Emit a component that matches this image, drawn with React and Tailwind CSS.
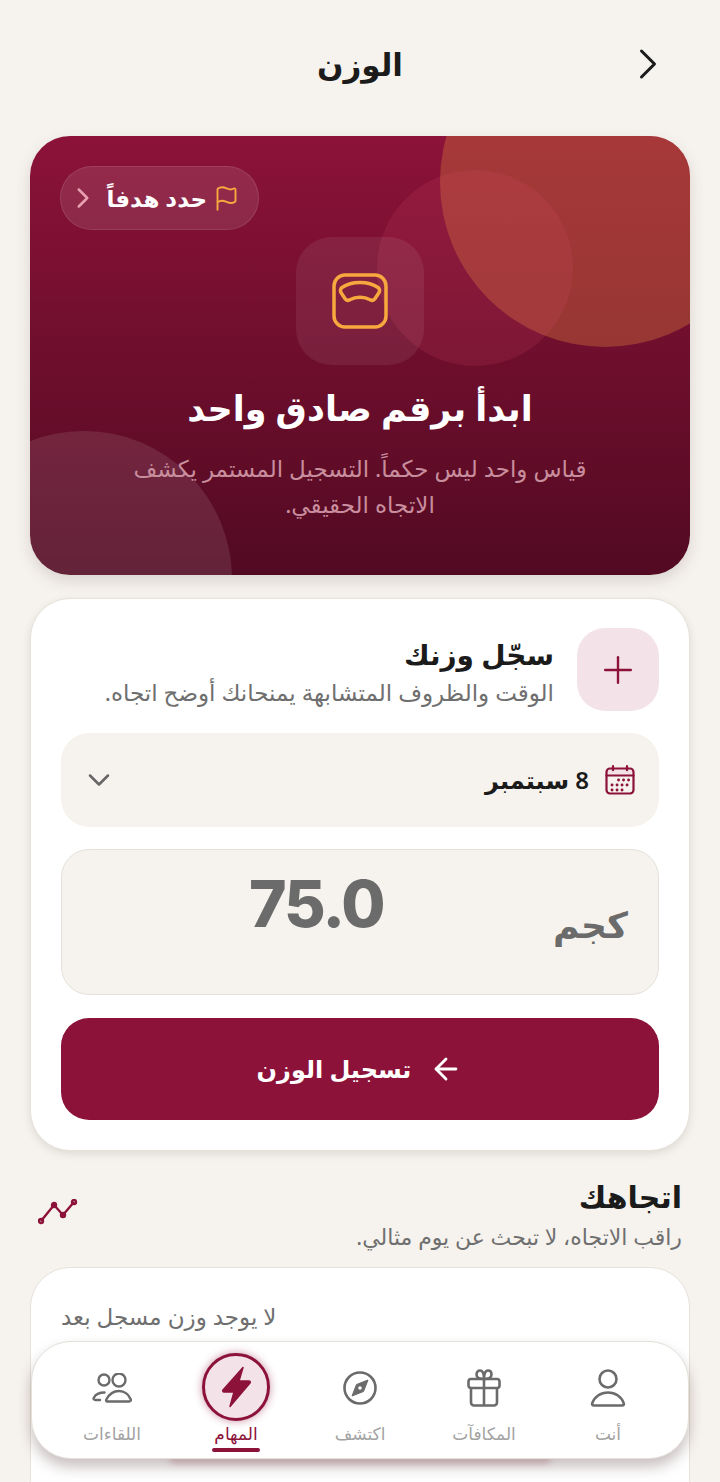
import { ChevronRight, ChevronDown, Flag, Plus, ArrowLeft } from "lucide-react";

function UserIcon() {
  return (
    <svg width="36" height="40" viewBox="0 0 36 40" fill="none" stroke="#6b6b6b" strokeWidth="2.600" strokeLinejoin="round">
      <circle cx="18" cy="11" r="8.500" />
      <path d="M4 37.500c-1.500 0-2.300-.8-1.800-2.200C4.300 29 10.500 24.500 18 24.500s13.700 4.500 15.800 10.800c.5 1.400-.3 2.200-1.800 2.200z" />
    </svg>
  );
}

function GiftIcon() {
  return (
    <svg width="34" height="38" viewBox="0 0 34 38" fill="none" stroke="#6b6b6b" strokeWidth="2.600" strokeLinejoin="round">
      <rect x="1.500" y="10" width="31" height="9" rx="2.500" />
      <path d="M4 19v14.500a3 3 0 0 0 3 3h20a3 3 0 0 0 3-3V19M17 10v26.500" />
      <path d="M17 10c-4 0-7.500-1-7.500-4.500C9.500 3 11 1.500 13 1.500c3 0 4 4 4 8.500 0-4.500 1-8.500 4-8.500 2 0 3.500 1.500 3.500 4 0 3.500-3.500 4.500-7.500 4.500z" />
    </svg>
  );
}

function CompassIcon() {
  return (
    <svg width="34" height="34" viewBox="0 0 34 34" fill="none" stroke="#6b6b6b" strokeWidth="2.600">
      <circle cx="17" cy="17" r="15.500" />
      <path d="M25 9l-4.500 11.500L9 25l4.500-11.500z" fill="#6b6b6b" strokeWidth="1" strokeLinejoin="round" />
      <circle cx="17" cy="17" r="1.800" fill="#fff" stroke="none" />
    </svg>
  );
}

function BoltIcon() {
  return (
    <svg width="31" height="42" viewBox="0 0 31 42" fill="#8c1239" stroke="#8c1239" strokeWidth="1.500" strokeLinejoin="round">
      <path d="M22 1.500L2 24c-.7 1 0 2 1 2h10L9 40.500 29 17c.7-1 0-2-1-2H18z" />
    </svg>
  );
}

function PeopleIcon() {
  return (
    <svg width="40" height="30" viewBox="0 0 40 30" fill="none" stroke="#6b6b6b" strokeWidth="2.400" strokeLinejoin="round" strokeLinecap="round">
      <circle cx="12" cy="7" r="5.500" />
      <circle cx="27" cy="7" r="6.500" />
      <path d="M15 28.500h22c1.500 0 2.200-.9 1.700-2.200C37 21.500 32.500 18 27 18s-10 3.500-12.500 8.300c-.6 1.200-.5 2.200.5 2.200z" />
      <path d="M8 27H3.500c-1.500 0-2.400-1-1.700-2.300C3.500 21.500 7 19.500 12.500 19.500" />
    </svg>
  );
}

const navItems = [
  { label: "أنت", icon: UserIcon },
  { label: "المكافآت", icon: GiftIcon },
  { label: "اكتشف", icon: CompassIcon },
  { label: "المهام", icon: BoltIcon, active: true },
  { label: "اللقاءات", icon: PeopleIcon },
];

function ScaleIcon() {
  return (
    <svg width="56" height="56" viewBox="0 0 56 56" fill="none" stroke="#f7a83e" strokeWidth="3.500" strokeLinejoin="round">
      <rect x="2" y="2" width="52" height="52" rx="11" />
      <path d="M10 14.500C15 11 21 9.500 28 9.500s13 1.500 18 5c1.800 1.300 2 3.500.9 5.200l-4 6c-1.200 1.800-3 2-4.800 1-3-1.700-6.300-2.500-10.100-2.500s-7.100.8-10.100 2.500c-1.800 1-3.600.8-4.800-1l-4-6c-1.100-1.700-.9-3.900.9-5.200z" />
    </svg>
  );
}

function CalendarIcon() {
  return (
    <svg width="30" height="30" viewBox="0 0 30 30" fill="none" stroke="#8c1239" strokeWidth="2.200" strokeLinecap="round">
      <path d="M1.500 10.500V6.500a3 3 0 0 1 3-3h21a3 3 0 0 1 3 3v4z" fill="#f3e3e8" stroke="none" />
      <rect x="1.500" y="3.500" width="27" height="25" rx="3.500" />
      <path d="M1.500 10.500h27M8 1.200v4M22 1.200v4" />
      <path strokeWidth="2.800" d="M13.500 15h.1M18.500 15h.1M23.500 15h.1M7 20h.1M12 20h.1M17 20h.1M22 20h.1M7 25h.1M12 25h.1M17 25h.1" />
    </svg>
  );
}

function TrendIcon() {
  return (
    <svg width="40" height="26" viewBox="0 0 40 26" fill="none" stroke="#8c1239" strokeWidth="2.400" className="mb-[6px]">
      <path d="M3 22L16 6l9 10 11-13" />
      <circle cx="3" cy="22" r="2" />
      <circle cx="16" cy="6" r="2" />
      <circle cx="25" cy="16" r="2" />
      <circle cx="36" cy="3" r="2" />
    </svg>
  );
}

function Hero() {
  return (
    <section className="relative mx-[30px] h-[439px] overflow-hidden rounded-[40px] bg-gradient-to-b from-[#8c1239] to-[#520a22] px-[30px] pt-[30px] shadow-[0_6px_16px_rgba(60,20,30,0.14)]">
      <div className="absolute left-[410px] top-[-119px] h-[330px] w-[330px] rounded-full bg-[#c8693a]/45" />
      <div className="absolute left-[347px] top-[34px] h-[196px] w-[196px] rounded-full bg-[#e0506a]/15" />
      <div className="absolute left-[-94px] top-[295px] h-[296px] w-[296px] rounded-full bg-white/10" />

      <div className="relative flex justify-end">
        <div className="flex h-[64px] w-[199px] items-center gap-[6px] rounded-full border border-white/10 bg-white/10 pr-[18px]">
          <Flag size={27} strokeWidth={1.7} className="shrink-0 text-[#f7a83e]" />
          <span className="whitespace-nowrap text-[23px] font-bold leading-none text-white">حدد هدفاً</span>
          <ChevronRight size={34} strokeWidth={1.800} className="mr-auto ml-[10px] shrink-0 text-[#e8a0b0]" />
        </div>
      </div>

      <div className="relative mx-auto mt-[7px] flex h-[128px] w-[128px] items-center justify-center rounded-[36px] bg-white/7">
        <ScaleIcon />
      </div>

      <h2 className="relative mt-[17px] text-center text-[35px] font-bold leading-[52px] text-white">ابدأ برقم صادق واحد</h2>
      <p className="relative mx-auto mt-[16px] w-[480px] text-center text-[23px] leading-[36px] text-[#c98e9e]">
        قياس واحد ليس حكماً. التسجيل المستمر يكشف الاتجاه الحقيقي.
      </p>
    </section>
  );
}

function LogCard() {
  return (
    <section className="mx-[30px] mt-[23px] h-[553px] rounded-[40px] border border-[#e6e2da] bg-white px-[30px] pt-[29px] shadow-[0_3px_8px_rgba(60,40,30,0.12)]">
      <div className="flex items-center gap-[23px]">
        <div className="flex h-[83px] w-[82px] items-center justify-center rounded-[28px] bg-[#f3e3e8]">
          <Plus size={44} strokeWidth={1.300} className="text-[#8c1239]" />
        </div>
        <div>
          <h3 className="text-[28px] font-bold leading-[44px] text-[#1b1b1b]">سجّل وزنك</h3>
          <p className="text-[23px] leading-[32px] text-[#6f6f6f]">الوقت والظروف المتشابهة يمنحانك أوضح اتجاه.</p>
        </div>
      </div>

      <div className="mt-[22px] flex h-[94px] items-center rounded-[28px] bg-[#f6f3ee] pl-[20px] pr-[24px]">
        <CalendarIcon />
        <span className="mr-[16px] text-[24px] font-semibold text-[#1b1b1b]">8 سبتمبر</span>
        <ChevronDown size={36} strokeWidth={1.700} className="mr-auto text-[#666]" />
      </div>

      <div className="mt-[22px] flex h-[146px] rounded-[28px] border-[1.5px] border-[#e4e1da] bg-[#f6f3ee] pl-[187px] pr-[30px]">
        <span className="mt-[47px] text-[36px] font-semibold leading-[56px] text-[#6b6b6b]">كجم</span>
        <span dir="ltr" className="mr-auto mt-[14px] font-['Inter',sans-serif] text-[64px] font-extrabold leading-[80px] tracking-[-0.03em] text-[#6b6b6b]">75.0</span>
      </div>

      <button className="mt-[23px] flex h-[102px] w-full items-center justify-center gap-[18px] rounded-[28px] bg-[#8c1239] text-[24px] font-semibold text-white">
        <ArrowLeft size={34} strokeWidth={2} className="order-first" />
        <span>تسجيل الوزن</span>
      </button>
    </section>
  );
}

function BottomNav() {
  return (
    <>
      <div className="absolute bottom-[18px] left-[170px] h-[8px] w-[380px] bg-[#8c1239]/20 blur-[3px]" />
      <nav className="absolute bottom-[23px] left-[31px] flex h-[118px] w-[658px] items-start rounded-[40px] border-[1.5px] border-[#e4e1da] bg-white px-[18px] shadow-[0_8px_14px_rgba(60,30,30,0.28)]">
        {navItems.map(({ label, icon: Icon, active }) => (
          <div key={label} className="relative flex h-full flex-1 flex-col items-center">
            {active ? (
              <div className="mt-[11px] flex h-[68px] w-[68px] items-center justify-center rounded-full border-[3px] border-[#8c1239] bg-[#f3e3e8] shadow-[0_0_8px_rgba(140,18,57,0.45)]">
                <Icon />
              </div>
            ) : (
              <div className="mt-[12px] flex h-[67px] items-center justify-center">
                <Icon />
              </div>
            )}
            <span className={active ? "text-[17px] leading-[26px] text-[#8c1239]" : "text-[17px] leading-[26px] text-[#a3a3a3]"}>{label}</span>
            {active && <div className="mt-[1px] h-[4px] w-[48px] rounded-full bg-[#8c1239]" />}
          </div>
        ))}
      </nav>
    </>
  );
}

export default function App() {
  return (
    <div dir="rtl" className="relative h-[1482px] w-[720px] overflow-hidden bg-[#f6f3ee] font-['Noto_Sans','DejaVu_Sans',sans-serif]">
      <header className="flex h-[136px] items-center pb-[8px] pr-[46px]">
        <ChevronRight size={52} strokeWidth={1.400} className="text-[#1b1b1b]" />
        <h1 className="mr-[219px] text-[31px] font-bold text-[#1b1b1b]">الوزن</h1>
      </header>

      <Hero />
      <LogCard />

      <div className="mx-[38px] mt-[25px] flex items-center justify-between">
        <div>
          <h3 className="text-[30px] font-bold leading-[42px] text-[#1b1b1b]">اتجاهك</h3>
          <p className="text-[22px] leading-[36px] text-[#6f6f6f]">راقب الاتجاه، لا تبحث عن يوم مثالي.</p>
        </div>
        <TrendIcon />
      </div>

      <section className="mx-[30px] mt-[13px] h-[300px] rounded-[40px] border border-[#e6e2da] bg-white px-[30px] pt-[30px]">
        <p className="text-left text-[23px] leading-[36px] text-[#6f6f6f]">لا يوجد وزن مسجل بعد</p>
      </section>

      <BottomNav />
    </div>
  );
}
